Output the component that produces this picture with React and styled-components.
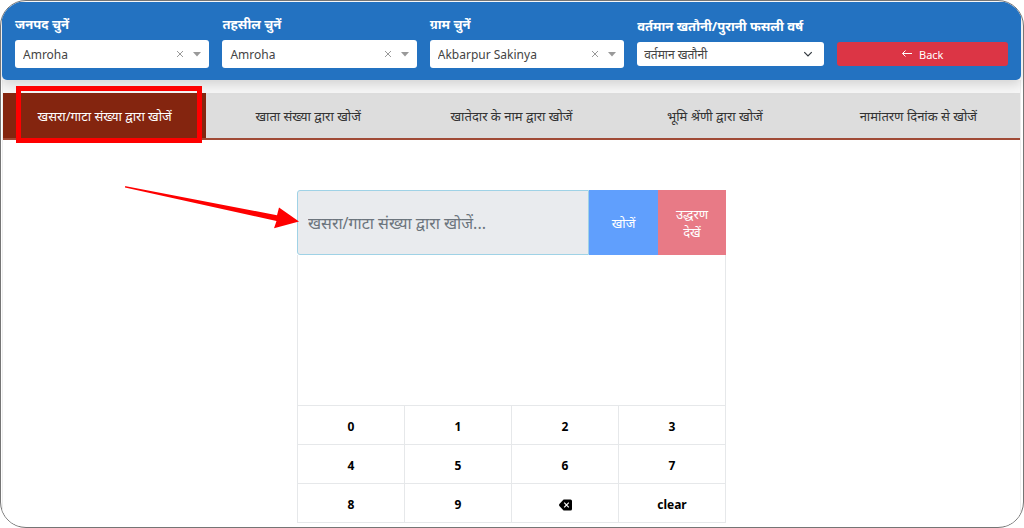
import React, { useState } from 'react';
import styled, { createGlobalStyle } from 'styled-components';

const tabs = [
  'खसरा/गाटा संख्या द्वारा खोजें',
  'खाता संख्या द्वारा खोजें',
  'खातेदार के नाम द्वारा खोजें',
  'भूमि श्रेंणी द्वारा खोजें',
  'नामांतरण दिनांक से खोजें',
];

const places = [
  { id: 'district', label: 'जनपद चुनें', value: 'Amroha' },
  { id: 'tehsil', label: 'तहसील चुनें', value: 'Amroha' },
  { id: 'village', label: 'ग्राम चुनें', value: 'Akbarpur Sakinya' },
];

const digits = ['0', '1', '2', '3', '4', '5', '6', '7', '8', '9'];

const App = () => {

  const [active, setActive] = useState(0);
  const [search, setSearch] = useState('');

  return (
    <Frame>
      <GlobalStyle />
      <Header>
        {places.map((place) => (
          <PlaceField key={place.id} {...place} />
        ))}
        <Field>
          <Label htmlFor="year">वर्तमान खतौनी/पुरानी फसली वर्ष</Label>
          <SelectBox $small>
            <Select id="year">
              <option>वर्तमान खतौनी</option>
            </Select>
            <Chevron viewBox="0 0 16 16" aria-hidden="true">
              <path d="m2 5 6 6 6-6" />
            </Chevron>
          </SelectBox>
        </Field>
        <BackField>
          <BackButton type="button">
            <BackIcon viewBox="0 0 12 12" aria-hidden="true">
              <path d="M11 5.5H1.5M4.5 2.5l-3 3 3 3" />
            </BackIcon>
            Back
          </BackButton>
        </BackField>
      </Header>
      <Content>
        <Tabs>
          {tabs.map((tab, index) => (
            <Tab key={tab} type="button" $active={index === active} onClick={() => setActive(index)}>
              {tab}
              {index === 0 && <Highlight />}
            </Tab>
          ))}
        </Tabs>
        <Panel>
          <SearchRow>
            <SearchInput
              type="text"
              aria-label={tabs[active]}
              placeholder={tabs[active] + '...'}
              value={search}
              onChange={(e) => setSearch(e.target.value)}
            />
            <ActionButton type="button" $color="#609ffd">खोजें</ActionButton>
            <ActionButton type="button" $color="#e87a86">उद्धरण देखें</ActionButton>
          </SearchRow>
          <Results />
          <Keypad>
            {digits.map((digit) => (
              <Key key={digit} type="button" onClick={() => setSearch(search + digit)}>{digit}</Key>
            ))}
            <Key type="button" aria-label="backspace" onClick={() => setSearch(search.slice(0, -1))}>
              <Backspace viewBox="0 0 13 12" aria-hidden="true">
                <path d="M4.6 0.5H11.5A1.5 1.5 0 0 1 13 2V10A1.5 1.5 0 0 1 11.5 11.5H4.6L0.4 7Q-0.3 6 0.4 5Z" fill="#000000" />
                <path d="M5.2 3.7l4.6 4.6M9.8 3.7L5.2 8.3" stroke="#ffffff" strokeWidth="1.2" />
              </Backspace>
            </Key>
            <Key type="button" onClick={() => setSearch('')}>clear</Key>
          </Keypad>
          <Arrow viewBox="0 0 174 46" aria-hidden="true">
            <path d="M0 1.3L1 1.2L152 30.2L154 22.5L174 36.5L149 43.2L151.5 36L0 2.4Z" />
          </Arrow>
        </Panel>
      </Content>
    </Frame>
  );
}

const PlaceField = ( props ) => {

  const [value, setValue] = useState(props.value);

  return (
    <Field>
      <Label htmlFor={props.id}>{props.label}</Label>
      <SelectBox>
        <Select id={props.id} value={value} onChange={(e) => setValue(e.target.value)}>
          <option value=""></option>
          <option>{props.value}</option>
        </Select>
        <ClearButton type="button" aria-label="clear" onClick={() => setValue('')}>
          <svg viewBox="0 0 8 8" width="8" height="8">
            <path d="M1 1l6 6M7 1L1 7" stroke="#999999" />
          </svg>
        </ClearButton>
        <Caret viewBox="0 0 8 5" aria-hidden="true">
          <path d="M0 0h8L4 4.5z" />
        </Caret>
      </SelectBox>
    </Field>
  );
}

export default App;

const GlobalStyle = createGlobalStyle`
  * {
    box-sizing: border-box;
  }
  body {
    margin: 0;
    background-color: #ffffff;
  }
  body, button, input, select {
    font-family: "Noto Sans", "Noto Sans Devanagari", sans-serif;
  }
`;

const Frame = styled.div`
  min-height: 100vh;
  padding: 1px 2px 1px 1px;
  border: 1px solid #757575;
  border-radius: 26px;
  overflow: hidden;
`;

const Header = styled.header`
  position: relative;
  display: grid;
  grid-template-columns: 195fr 195fr 195fr 187fr 172fr;
  align-items: center;
  gap: 13px;
  padding: 12px 13px;
  background-color: #2372c1;
  border-radius: 0 0 5px 5px;
  box-shadow: 0 4px 12px rgba(0, 0, 0, 0.15);
`;

const Field = styled.div`
  display: flex;
  flex-direction: column;
  gap: 6px;
  min-width: 0;
`;

const BackField = styled(Field)`
  padding-top: 26px;
`;

const Label = styled.label`
  height: 20px;
  line-height: 20px;
  font-size: 13px;
  font-weight: bold;
  color: #ffffff;
  white-space: nowrap;
`;

const SelectBox = styled.div`
  display: flex;
  align-items: center;
  height: ${props => props.$small ? '24px' : '28px'};
  padding: ${props => props.$small ? '0 11px 0 7px' : '0 8px'};
  background-color: #ffffff;
  border-radius: 3px;
`;

const Select = styled.select`
  flex: 1;
  min-width: 0;
  height: 100%;
  padding: 0;
  border: 0;
  appearance: none;
  background: none;
  font-size: 12px;
  color: #444444;
`;

const ClearButton = styled.button`
  display: flex;
  padding: 4px;
  margin-right: 5px;
  border: 0;
  background: none;
`;

const Caret = styled.svg`
  width: 8px;
  height: 5px;
  fill: #999999;
`;

const Chevron = styled.svg`
  width: 10px;
  height: 10px;
  fill: none;
  stroke: #343a40;
  stroke-width: 2;
`;

const BackButton = styled.button`
  display: flex;
  align-items: center;
  justify-content: center;
  gap: 6px;
  height: 24px;
  padding: 0;
  border: 0;
  border-radius: 3px;
  background-color: #dc3545;
  font-size: 11px;
  color: #ffffff;
`;

const BackIcon = styled.svg`
  width: 12px;
  height: 12px;
  fill: none;
  stroke: #ffffff;
`;

const Content = styled.main`
  padding: 13px 0 3px;
  border: solid #eeeeee;
  border-width: 0 1px;
  background: linear-gradient(#f6f6f6 13px, #ffffff 13px);
`;

const Tabs = styled.nav`
  display: grid;
  grid-template-columns: repeat(5, 1fr);
  background-color: #dddddd;
  border-bottom: 2px solid #a04a36;
`;

const Tab = styled.button`
  position: relative;
  height: 45px;
  padding: 0;
  border: 0;
  background-color: ${props => props.$active ? '#84250f' : 'transparent'};
  font-size: 13px;
  color: ${props => props.$active ? '#ffffff' : '#333333'};
`;

const Highlight = styled.span`
  position: absolute;
  inset: -7px 4px -5px 13px;
  border: 5px solid #fe0000;
`;

const Panel = styled.section`
  position: relative;
  width: 42%;
  min-width: 429px;
  margin: 50px auto 0;
`;

const SearchRow = styled.div`
  display: grid;
  grid-template-columns: 1fr 69px 68px;
  height: 65px;
`;

const SearchInput = styled.input`
  min-width: 0;
  padding: 0 10px;
  border: 1px solid #9fd2e6;
  border-radius: 3px 0 0 3px;
  background-color: #e9ebee;
  font-size: 16px;
  color: #333333;
  &::placeholder{
    color: #6c757d;
  }
`;

const ActionButton = styled.button`
  padding: 0 12px;
  border: 0;
  background-color: ${props => props.$color};
  line-height: 18px;
  font-size: 13px;
  color: #ffffff;
`;

const Results = styled.div`
  height: 150px;
  border: solid #e6e8ea;
  border-width: 0 1px;
`;

const Keypad = styled.div`
  display: grid;
  grid-template-columns: repeat(4, 1fr);
  gap: 1px;
  padding: 1px;
  background-color: #e6e8ea;
`;

const Key = styled.button`
  display: flex;
  align-items: center;
  justify-content: center;
  height: 38px;
  padding: 3px 0 0;
  border: 0;
  background-color: #ffffff;
  font-size: 12px;
  font-weight: bold;
  color: #000000;
`;

const Backspace = styled.svg`
  width: 13px;
  height: 12px;
`;

const Arrow = styled.svg`
  position: absolute;
  top: -5px;
  left: -172px;
  width: 174px;
  height: 46px;
  fill: #fe0000;
`;
